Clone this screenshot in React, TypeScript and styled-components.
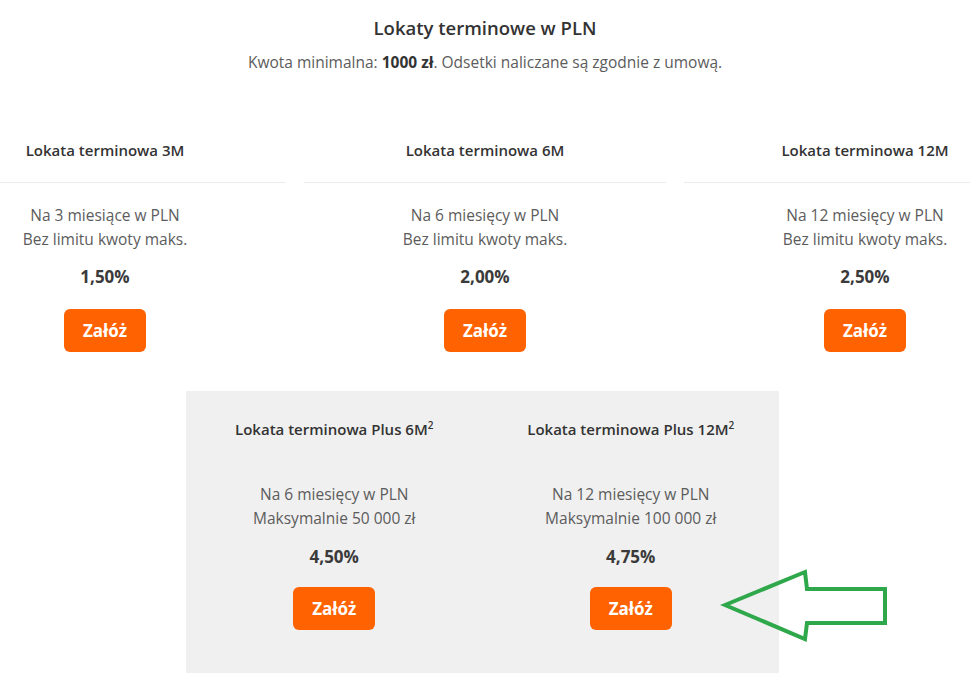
import * as React from 'react'
import styled, { createGlobalStyle } from 'styled-components'

const GlobalStyle = createGlobalStyle`
  html, body {
    margin: 0;
    padding: 0;
    background: #fff;
  }
  body {
    font-family: 'Open Sans', 'Noto Sans', Arial, sans-serif;
    color: #555;
  }
`

const Page = styled('div')`
  position: relative;
  width: 970px;
  height: 687px;
  overflow: hidden;
`

const Header = styled('header')`
  padding-top: 16px;
  text-align: center;
`

const Title = styled('h1')`
  margin: 0;
  font-size: 18.5px;
  line-height: 24px;
  font-weight: 600;
  color: #333;
`

const Lead = styled('p')`
  margin: 11px 0 0;
  font-size: 15.5px;
  line-height: 22px;
  color: #5c5c5c;
  b {
    color: #333;
    font-weight: 700;
  }
`

const Row = styled('div')`
  display: flex;
  justify-content: center;
  margin-top: 67px;
`

const Columns = styled('div')`
  flex: 0 0 1122px;
  display: grid;
  grid-template-columns: repeat(3, 362px);
  column-gap: 18px;
`

const Offer = styled('div')`
  display: flex;
  flex-direction: column;
  align-items: center;
  text-align: center;
`

const OfferTitle = styled('h2')<{ $divider?: boolean }>`
  align-self: stretch;
  margin: 0;
  font-size: 15px;
  line-height: 20px;
  font-weight: 600;
  color: #333;
  padding-bottom: ${p => (p.$divider ? '22px' : '0')};
  border-bottom: ${p => (p.$divider ? '1px solid #ececec' : 'none')};
  sup {
    font-size: 10px;
    line-height: 0;
    vertical-align: 6px;
  }
`

const Details = styled('div')<{ $top: number }>`
  margin-top: ${p => p.$top}px;
  font-size: 15.5px;
  line-height: 24px;
  color: #5c5c5c;
`

const Rate = styled('div')<{ $top: number }>`
  margin-top: ${p => p.$top}px;
  font-size: 17px;
  line-height: 22px;
  font-weight: 700;
  color: #3a3a3a;
`

const Button = styled('button')<{ $top: number }>`
  margin-top: ${p => p.$top}px;
  width: 82px;
  height: 43px;
  border: none;
  border-radius: 6px;
  background: #ff6200;
  color: #fff;
  font-family: inherit;
  font-size: 17px;
  font-weight: 700;
  cursor: pointer;
`

const PlusBox = styled('section')`
  width: 593px;
  margin: 39px 0 0 186px;
  padding: 28px 0 43px;
  background: #f0f0f0;
  display: grid;
  grid-template-columns: 1fr 1fr;
`

const Arrow = styled('svg')`
  position: absolute;
  left: 720px;
  top: 566px;
`

type OfferData = { title: string; sup?: boolean; line1: string; line2: string; rate: string }

const standard: OfferData[] = [
  { title: 'Lokata terminowa 3M', line1: 'Na 3 miesiące w PLN', line2: 'Bez limitu kwoty maks.', rate: '1,50%' },
  { title: 'Lokata terminowa 6M', line1: 'Na 6 miesięcy w PLN', line2: 'Bez limitu kwoty maks.', rate: '2,00%' },
  { title: 'Lokata terminowa 12M', line1: 'Na 12 miesięcy w PLN', line2: 'Bez limitu kwoty maks.', rate: '2,50%' },
]

const plus: OfferData[] = [
  { title: 'Lokata terminowa Plus 6M', sup: true, line1: 'Na 6 miesięcy w PLN', line2: 'Maksymalnie 50 000 zł', rate: '4,50%' },
  { title: 'Lokata terminowa Plus 12M', sup: true, line1: 'Na 12 miesięcy w PLN', line2: 'Maksymalnie 100 000 zł', rate: '4,75%' },
]

const App: React.FunctionComponent = () => (
  <Page>
    <GlobalStyle />
    <Header>
      <Title>Lokaty terminowe w PLN</Title>
      <Lead>
        Kwota minimalna: <b>1000 zł</b>. Odsetki naliczane są zgodnie z umową.
      </Lead>
    </Header>

    <Row>
      <Columns>
        {standard.map(o => (
          <Offer key={o.title}>
            <OfferTitle $divider>{o.title}</OfferTitle>
            <Details $top={20}>
              {o.line1}
              <br />
              {o.line2}
            </Details>
            <Rate $top={15}>{o.rate}</Rate>
            <Button $top={21}>Załóż</Button>
          </Offer>
        ))}
      </Columns>
    </Row>

    <PlusBox>
      {plus.map(o => (
        <Offer key={o.title}>
          <OfferTitle>
            {o.title}
            {o.sup && <sup>2</sup>}
          </OfferTitle>
          <Details $top={43}>
            {o.line1}
            <br />
            {o.line2}
          </Details>
          <Rate $top={16}>{o.rate}</Rate>
          <Button $top={19}>Załóż</Button>
        </Offer>
      ))}
    </PlusBox>

    <Arrow width="172" height="80" viewBox="0 0 172 80">
      <polygon
        points="5,39 85,6 87,23 165,23 165,57 87,57 85,73"
        fill="none"
        stroke="#2ea84a"
        strokeWidth="4"
        strokeLinejoin="miter"
      />
    </Arrow>
  </Page>
)

export default App
